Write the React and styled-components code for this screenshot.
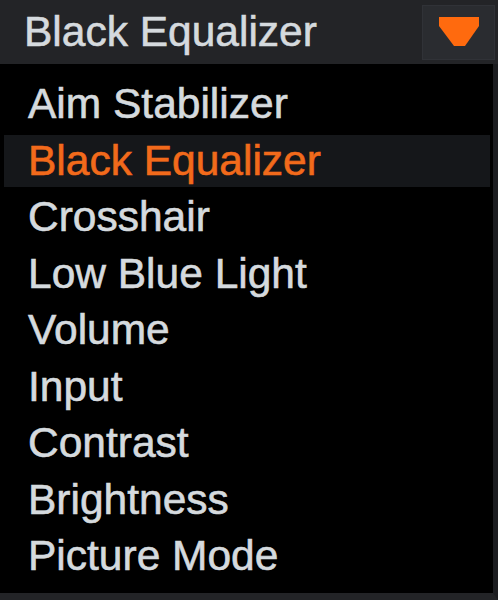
import React, { useState } from 'react';
import styled, { createGlobalStyle } from 'styled-components';

const GlobalStyle = createGlobalStyle`
  html, body {
    margin: 0;
    padding: 0;
    background: #000;
  }
  body {
    font-family: "Liberation Sans", Arial, sans-serif;
  }
`;

const Panel = styled.div`
  width: 498px;
  height: 600px;
  display: flex;
  flex-direction: column;
  background: #000;
`;

const Header = styled.div`
  height: 64px;
  flex-shrink: 0;
  display: flex;
  align-items: center;
  justify-content: space-between;
  padding: 0 3px 0 24px;
  background: #232427;
  color: #d5dade;
  font-size: 42.5px;
  -webkit-text-stroke: 0.6px #d5dade;
`;

const ArrowButton = styled.button`
  width: 73px;
  height: 55px;
  padding: 0;
  border: 1px solid #303237;
  background: #2a2c30;
  display: flex;
  align-items: center;
  justify-content: center;
  cursor: pointer;
`;

const List = styled.ul`
  flex: 1;
  display: flex;
  flex-direction: column;
  gap: 4px;
  list-style: none;
  margin: 0;
  padding: 14px 3px 0 4px;
  border-right: 5px solid #1c1d20;
  border-bottom: 7px solid #232427;
`;

const Item = styled.li`
  height: 52.5px;
  flex-shrink: 0;
  padding-left: 24px;
  font-size: 42.5px;
  line-height: 52.5px;
  white-space: nowrap;
  color: ${(props) => (props.active ? '#f26a1b' : '#d5dade')};
  -webkit-text-stroke: 0.6px ${(props) => (props.active ? '#f26a1b' : '#d5dade')};
  background: ${(props) => (props.active ? '#15171a' : 'transparent')};
  cursor: pointer;
`;

const items = [
  'Aim Stabilizer',
  'Black Equalizer',
  'Crosshair',
  'Low Blue Light',
  'Volume',
  'Input',
  'Contrast',
  'Brightness',
  'Picture Mode',
];

const App = () => {
  const [selected, setSelected] = useState('Black Equalizer');

  return (
    <>
      <GlobalStyle />
      <Panel>
        <Header>
          <span>{selected}</span>
          <ArrowButton>
            <svg width="40" height="30" viewBox="0 0 40 30">
              <polygon points="0,0 40,0 40,9 26,29 15,29 0,9" fill="#ff6a0e" />
            </svg>
          </ArrowButton>
        </Header>
        <List>
          {items.map((item) => (
            <Item
              key={item}
              active={item === selected}
              onClick={() => setSelected(item)}
            >
              {item}
            </Item>
          ))}
        </List>
      </Panel>
    </>
  );
};

export default App;
